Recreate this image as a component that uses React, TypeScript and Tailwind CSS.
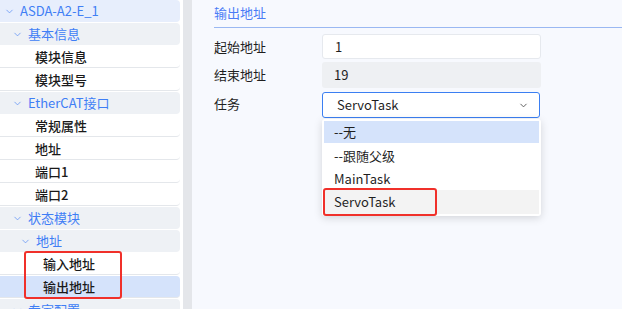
import React from "react";
import { ChevronDown } from "lucide-react";

type Row = { label: string; level: number; kind: "root" | "group" | "leaf"; selected?: boolean };

const rows: Row[] = [
  { label: "ASDA-A2-E_1", level: 0, kind: "root" },
  { label: "基本信息", level: 1, kind: "group" },
  { label: "模块信息", level: 2, kind: "leaf" },
  { label: "模块型号", level: 2, kind: "leaf" },
  { label: "EtherCAT接口", level: 1, kind: "group" },
  { label: "常规属性", level: 2, kind: "leaf" },
  { label: "地址", level: 2, kind: "leaf" },
  { label: "端口1", level: 2, kind: "leaf" },
  { label: "端口2", level: 2, kind: "leaf" },
  { label: "状态模块", level: 1, kind: "group" },
  { label: "地址", level: 2, kind: "group" },
  { label: "输入地址", level: 3, kind: "leaf" },
  { label: "输出地址", level: 3, kind: "leaf", selected: true },
  { label: "专家配置", level: 1, kind: "group" },
];

const padByLevel = ["pl-[4px]", "pl-[12px]", "pl-[35px]", "pl-[43px]"];
const groupPad = ["pl-[4px]", "pl-[12px]", "pl-[20px]"];

const TreeRow = ({ r }: { r: Row }) => {
  if (r.kind === "leaf") {
    return (
      <div
        className={`h-[22px] mb-px flex items-center ${padByLevel[r.level]} text-[13px] font-medium text-[#1a1a1a] rounded-r-[4px] border-b border-[#e4e7eb] ${
          r.selected ? "bg-[#d5e3fb]" : "bg-white"
        }`}
      >
        {r.label}
      </div>
    );
  }
  return (
    <div
      className={`h-[22px] mb-px flex items-center gap-[5px] ${groupPad[r.level]} text-[13px] text-[#3f7ef5] rounded-r-[4px] ${
        r.kind === "root" ? "bg-[#e7eefc]" : "bg-[#eef1f5]"
      }`}
    >
      <ChevronDown className="w-[11px] h-[11px] text-[#5a8ef5]" strokeWidth={1.6} />
      <span>{r.label}</span>
    </div>
  );
};

export default function App() {
  return (
    <div
      className="w-[622px] h-[309px] flex overflow-hidden bg-white"
      style={{ fontFamily: '"Noto Sans CJK SC", "Noto Sans", sans-serif' }}
    >
      {/* sidebar */}
      <div className="w-[183px] shrink-0 bg-white pr-[3px] relative">
        {rows.map((r, i) => (
          <TreeRow key={i} r={r} />
        ))}
        <div className="absolute left-[24px] top-[251px] w-[98px] h-[48px] border-2 border-[#f0302a] rounded-[3px]" />
      </div>
      <div className="w-[9px] shrink-0 bg-[#e4e6ea]" />

      {/* content */}
      <div className="flex-1 bg-[#f7f9fe] pl-[22px]">
        <div className="h-[28px] flex items-center pb-[1px] text-[13px] text-[#4a7cf6] border-b border-[#9ab8f2]">
          输出地址
        </div>

        <div className="mt-[6px] flex flex-col gap-[3px] text-[13px] text-[#1f1f1f]">
          <div className="flex items-center h-[25px]">
            <div className="w-[108px]">起始地址</div>
            <div className="w-[219px] h-[25px] bg-white border border-[#e6e9ee] rounded-[3px] flex items-center pl-[12px]">1</div>
          </div>
          <div className="flex items-center h-[26px]">
            <div className="w-[108px]">结束地址</div>
            <div className="w-[219px] h-[26px] bg-[#eef0f3] rounded-[3px] flex items-center pl-[12px]">19</div>
          </div>
          <div className="flex items-start h-[26px] mt-[1px]">
            <div className="w-[108px] pt-[2px]">任务</div>
            <div className="relative w-[218px]">
              <div className="h-[26px] bg-white border border-[#3b7ff2] rounded-[3px] flex items-center pl-[14px] pr-[10px] justify-between">
                <span>ServoTask</span>
                <ChevronDown className="w-[11px] h-[11px] text-[#555]" strokeWidth={2} />
              </div>
              <div className="absolute left-0 top-[27px] w-[219px] bg-white rounded-[3px] shadow-[0_2px_8px_rgba(0,0,0,0.15)] py-[2px] z-10">
                <div className="h-[22px] mx-[2px] bg-[#d5e3fb] flex items-center pl-[10px]">--无</div>
                <div className="h-[23px] mx-[2px] flex items-center pl-[10px] mt-px">--跟随父级</div>
                <div className="h-[23px] mx-[2px] flex items-center pl-[10px]">MainTask</div>
                <div className="relative h-[24px] mx-[2px] bg-[#f3f3f3] flex items-center pl-[10px]">
                  ServoTask
                  <div className="absolute -left-[1px] -top-[2px] w-[114px] h-[28px] border-2 border-[#f0302a] rounded-[3px]" />
                </div>
              </div>
            </div>
          </div>
        </div>
      </div>
    </div>
  );
}
